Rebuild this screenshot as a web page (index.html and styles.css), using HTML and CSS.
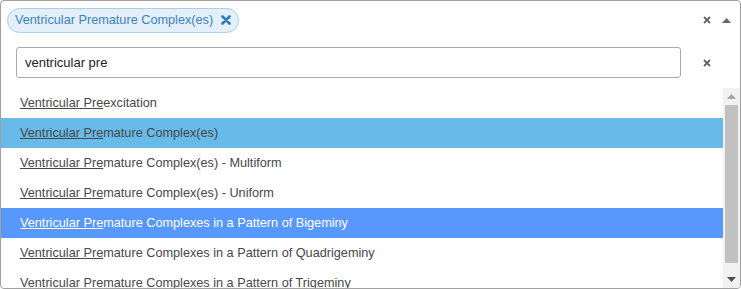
FILE: index.html
```html
<!DOCTYPE html>
<html lang="en">
<head>
    <meta charset="UTF-8">
    <title>Diagnosis Select</title>
    <link rel="stylesheet" href="styles.css">
</head>
<body>
    <div class="select">
        <div class="selection">
            <div class="tags">
                <span class="tag">
                    Ventricular Premature Complex(es)
                    <svg class="tag-remove" width="10" height="10" viewBox="0 0 10 10">
                        <path d="M1.5 1.5 L8.5 8.5 M8.5 1.5 L1.5 8.5" stroke="#2f7cbc" stroke-width="2.6" stroke-linecap="round"/>
                    </svg>
                </span>
            </div>
            <div class="controls">
                <svg width="8" height="8" viewBox="0 0 8 8">
                    <path d="M1 1 L7 7 M7 1 L1 7" stroke="#5b6470" stroke-width="1.8"/>
                </svg>
                <svg width="9" height="5" viewBox="0 0 9 5">
                    <path d="M0 5 L4.5 0 L9 5 Z" fill="#666"/>
                </svg>
            </div>
        </div>

        <div class="search">
            <input type="text" class="search-input" value="ventricular pre">
            <div class="search-clear">
                <svg width="8" height="8" viewBox="0 0 8 8">
                    <path d="M1 1 L7 7 M7 1 L1 7" stroke="#5b6470" stroke-width="1.8"/>
                </svg>
            </div>
        </div>

        <div class="results">
            <ul class="options">
                <li class="option"><span class="match">Ventricular Pre</span>excitation</li>
                <li class="option selected"><span class="match">Ventricular Pre</span>mature Complex(es)</li>
                <li class="option"><span class="match">Ventricular Pre</span>mature Complex(es) - Multiform</li>
                <li class="option"><span class="match">Ventricular Pre</span>mature Complex(es) - Uniform</li>
                <li class="option highlighted"><span class="match">Ventricular Pre</span>mature Complexes in a Pattern of Bigeminy</li>
                <li class="option"><span class="match">Ventricular Pre</span>mature Complexes in a Pattern of Quadrigeminy</li>
                <li class="option"><span class="match">Ventricular Pre</span>mature Complexes in a Pattern of Trigeminy</li>
            </ul>
            <div class="scrollbar">
                <div class="scroll-arrow">
                    <svg width="9" height="5" viewBox="0 0 9 5"><path d="M0 5 L4.5 0 L9 5 Z" fill="#a3a3a3"/></svg>
                </div>
                <div class="scroll-track">
                    <div class="scroll-thumb"></div>
                </div>
                <div class="scroll-arrow">
                    <svg width="9" height="5" viewBox="0 0 9 5"><path d="M0 0 L9 0 L4.5 5 Z" fill="#505050"/></svg>
                </div>
            </div>
        </div>
    </div>
</body>
</html>
```

FILE: styles.css
```css
* {
    margin: 0;
    padding: 0;
    box-sizing: border-box;
}

body {
    font-family: 'Liberation Sans', Arial, sans-serif;
    font-size: 12.7px;
    color: #444;
    background-color: white;
}

.select {
    width: 741px;
    height: 289px;
    border: 1px solid #a0a0a0;
    border-radius: 4px;
    background-color: white;
    overflow: hidden;
    display: flex;
    flex-direction: column;
}

.selection {
    display: flex;
    align-items: center;
    padding: 6px;
    height: 38px;
}

.tags {
    flex: 1;
    display: flex;
}

.tag {
    display: inline-flex;
    align-items: center;
    height: 25px;
    padding: 0 7px 0 7px;
    background-color: #e3eff9;
    border: 1px solid #a9cfec;
    border-radius: 13px;
    color: #3b83bd;
    white-space: nowrap;
}

.tag-remove {
    margin-left: 8px;
}

.controls {
    display: flex;
    align-items: center;
    gap: 11px;
    padding-right: 3px;
}

.search {
    display: flex;
    align-items: center;
    margin-top: 8px;
    padding-left: 15px;
}

.search-input {
    flex: 1;
    height: 31px;
    border: 1px solid #aaa;
    border-radius: 3px;
    padding: 0 8px;
    font-family: 'Liberation Sans', Arial, sans-serif;
    font-size: 13px;
    color: #222;
    outline: none;
}

.search-clear {
    width: 59px;
    display: flex;
    justify-content: center;
    padding-right: 7px;
}

.results {
    flex: 1;
    display: flex;
    margin-top: 10px;
    min-height: 0;
}

.options {
    flex: 1;
    list-style: none;
    overflow: hidden;
}

.option {
    height: 30px;
    line-height: 30px;
    padding-left: 19px;
    color: #474747;
    white-space: nowrap;
}

.option .match {
    text-decoration: underline;
}

.option.selected {
    background-color: #68bbe8;
}

.option.highlighted {
    background-color: #5897fb;
    color: white;
}

.scrollbar {
    width: 17px;
    display: flex;
    flex-direction: column;
    background-color: #f1f1f1;
}

.scroll-arrow {
    height: 17px;
    display: flex;
    align-items: center;
    justify-content: center;
}

.scroll-track {
    flex: 1;
    padding: 0 2px;
}

.scroll-thumb {
    height: 158px;
    background-color: #c1c1c1;
}
```
